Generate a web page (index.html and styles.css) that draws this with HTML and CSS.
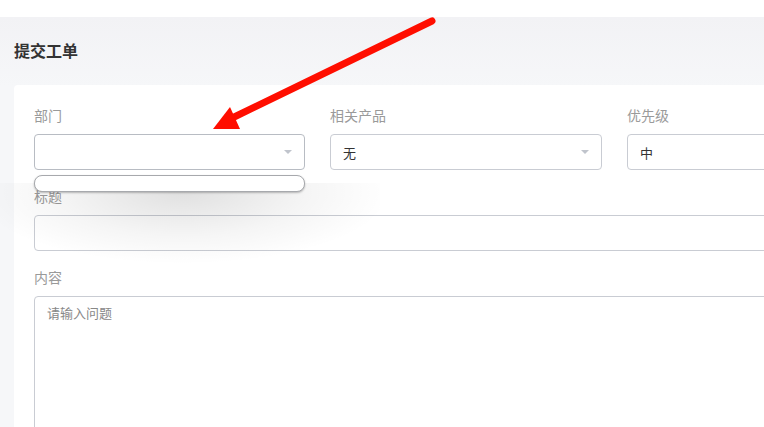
FILE: index.html
```html
<!DOCTYPE html>
<html lang="zh">
<head>
<meta charset="utf-8">
<title>提交工单</title>
<link rel="stylesheet" href="styles.css">
</head>
<body>
<div class="topbar"></div>
<main class="main">
  <h1 class="title">提交工单</h1>
  <section class="card">
    <div class="row three">
      <div class="field">
        <label class="label">部门</label>
        <div class="select"><span class="value"></span><span class="caret"></span></div>
      </div>
      <div class="field">
        <label class="label">相关产品</label>
        <div class="select"><span class="value">无</span><span class="caret"></span></div>
      </div>
      <div class="field">
        <label class="label">优先级</label>
        <div class="select"><span class="value">中</span></div>
      </div>
    </div>
    <div class="field">
      <label class="label">标题</label>
      <div class="input"></div>
    </div>
    <div class="field">
      <label class="label">内容</label>
      <div class="textarea"><span class="placeholder">请输入问题</span></div>
    </div>
  </section>
</main>
<div class="shadow"></div>
<div class="dropdown"></div>
<svg class="arrow" width="764" height="427" viewBox="0 0 764 427">
  <line x1="432" y1="21" x2="228" y2="120" stroke="#ff0e00" stroke-width="7" stroke-linecap="round"/>
  <polygon points="213,129 230,107 240,129" fill="#ff0e00"/>
</svg>
</body>
</html>
```
FILE: styles.css
```css
html, body {
  margin: 0;
  padding: 0;
}
body {
  width: 764px;
  height: 427px;
  overflow: hidden;
  background: #ffffff;
  font-family: "Noto Sans CJK SC", "Liberation Sans", sans-serif;
  position: relative;
}
.topbar {
  height: 17px;
  background: #ffffff;
}
.main {
  background: linear-gradient(#f2f2f5, #f6f7f9 70px);
  padding: 0 0 0 14px;
  height: 410px;
}
.title {
  margin: 0;
  padding: 23px 0 0 0;
  height: 68px;
  box-sizing: border-box;
  font-size: 16px;
  line-height: 20px;
  font-weight: 700;
  color: #333333;
}
.card {
  width: 906px;
  background: #ffffff;
  border-radius: 4px;
  padding: 22px 20px 20px 20px;
  box-sizing: border-box;
  height: 400px;
  display: flex;
  flex-direction: column;
  gap: 18px;
}
.row.three {
  display: grid;
  grid-template-columns: 271px 272px 272px;
  column-gap: 25px;
}
.field {
  display: flex;
  flex-direction: column;
}
.label {
  font-size: 14px;
  line-height: 16px;
  color: #9a9a9a;
  margin-bottom: 11px;
}
.select, .input {
  height: 36px;
  border: 1px solid #c9ccd3;
  border-radius: 4px;
  box-sizing: border-box;
  display: flex;
  align-items: center;
  justify-content: space-between;
  padding: 0 10px 0 12px;
}
.row.three .field:first-child .select {
  border-color: #b8bcc3;
}
.value {
  font-size: 13px;
  color: #333333;
}
.caret {
  width: 0;
  height: 0;
  border-left: 4px solid transparent;
  border-right: 4px solid transparent;
  border-top: 4px solid #c0c4cc;
  margin-right: 2px;
}
.textarea {
  height: 160px;
  border: 1px solid #c9ccd3;
  border-radius: 4px;
  box-sizing: border-box;
  padding: 6px 12px;
  font-size: 13px;
  line-height: 20px;
}
.placeholder {
  font-size: 13px;
  color: #888888;
}
.shadow {
  position: absolute;
  left: 0;
  top: 183px;
  width: 380px;
  height: 90px;
  background: radial-gradient(ellipse 55% 80% at 48% 10%, rgba(0,0,0,0.12), rgba(0,0,0,0.04) 60%, rgba(0,0,0,0) 100%);
}
.dropdown {
  position: absolute;
  left: 34px;
  top: 175px;
  width: 271px;
  height: 17px;
  box-sizing: border-box;
  background: #ffffff;
  border: 1px solid #a7a9ad;
  border-radius: 8px;
  box-shadow: 0 1px 2px rgba(0,0,0,0.25);
}
.arrow {
  position: absolute;
  left: 0;
  top: 0;
}
```
